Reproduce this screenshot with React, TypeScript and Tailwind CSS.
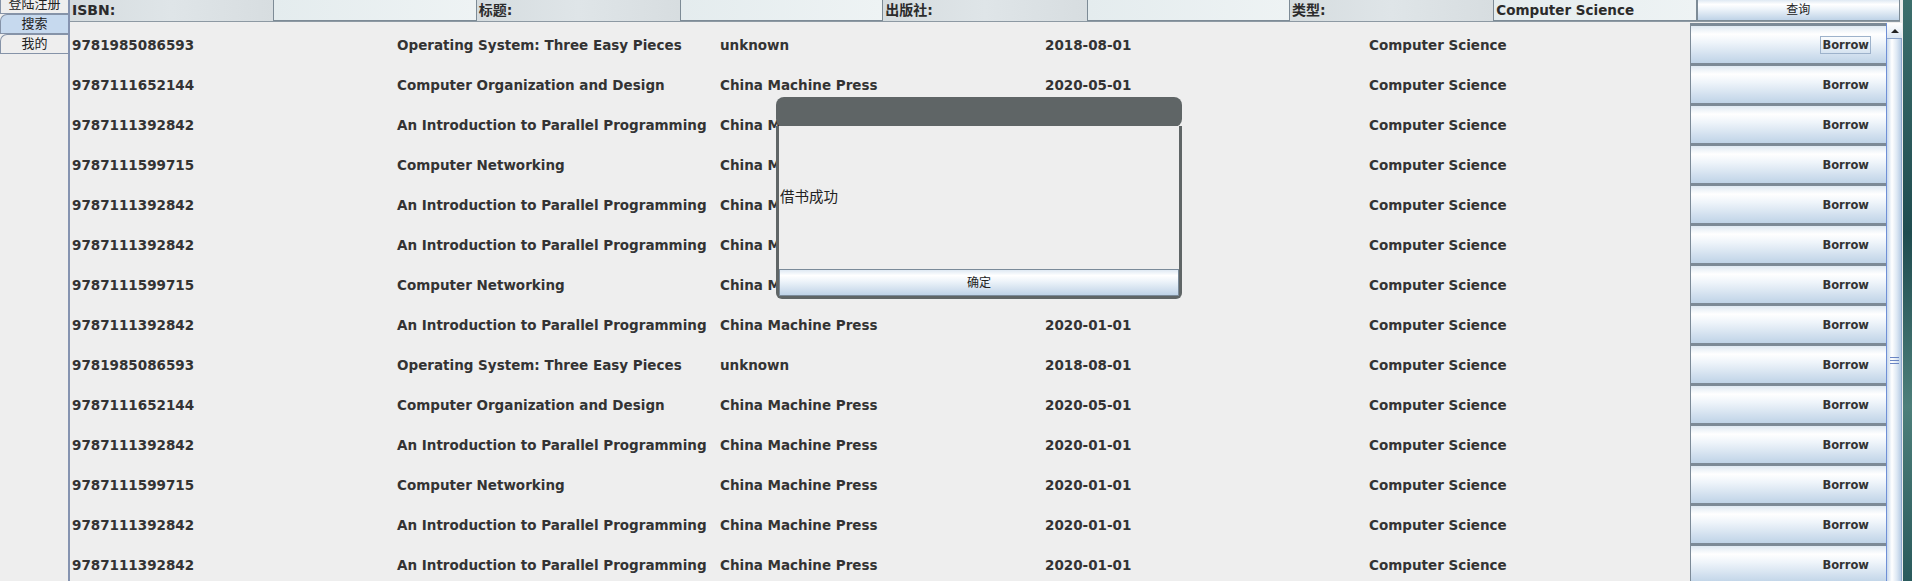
import React from 'react';

// rows of the book table
interface Book {
    isbn: string;
    title: string;
    publisher: string;
    date: string;
    category: string;
}

const OS: Book = { isbn: '9781985086593', title: 'Operating System: Three Easy Pieces', publisher: 'unknown', date: '2018-08-01', category: 'Computer Science' };
const COD: Book = { isbn: '9787111652144', title: 'Computer Organization and Design', publisher: 'China Machine Press', date: '2020-05-01', category: 'Computer Science' };
const PP: Book = { isbn: '9787111392842', title: 'An Introduction to Parallel Programming', publisher: 'China Machine Press', date: '2020-01-01', category: 'Computer Science' };
const NET: Book = { isbn: '9787111599715', title: 'Computer Networking', publisher: 'China Machine Press', date: '2020-01-01', category: 'Computer Science' };

const books: Book[] = [OS, COD, PP, NET, PP, PP, NET, PP, OS, COD, PP, NET, PP, PP];

const font = "font-['DejaVu_Sans','Noto_Sans_CJK_SC',sans-serif]";
const btnBg = 'bg-[linear-gradient(to_bottom,#dfe9f3,#ffffff_22%,#eef4fa_45%,#bfd3e7)]';

function Tab({ label, active }: { label: string; active?: boolean }) {
    return (
        <div
            className={`h-[20px] flex items-center justify-center text-[13px] text-[#222] border-t border-l border-b border-[#8593a8] rounded-tl-[7px] ${
                active ? 'bg-[#c6d9ee]' : 'bg-[#eeeeee]'
            }`}
        >
            {label}
        </div>
    );
}

function Label({ text }: { text: string }) {
    return (
        <div className="flex items-center pl-[2px] bg-[linear-gradient(to_right,#d5dcdf,#dfe5e8_50%,#d7dde0)] text-[14px] font-bold text-[#2b2b2b]">
            {text}
        </div>
    );
}

function Field({ value }: { value?: string }) {
    return (
        <div className="flex items-center pl-[2px] bg-[linear-gradient(to_right,#e4ecee,#eef3f4)] border-l border-b border-r border-[#7d8b96] text-[13.5px] font-bold text-[#2b2b2b]">
            {value}
        </div>
    );
}

export default function App() {
    return (
        <div className={`flex h-[581px] overflow-hidden ${font}`}>
            <div className="relative w-[1903px] shrink-0 flex bg-[#eeeeee]">
                {/* tabs on the left */}
                <div className="w-[70px] shrink-0 border-r-2 border-[#8593b0] -mt-[6px] flex flex-col">
                    <Tab label="登陆注册" />
                    <Tab label="搜索" active />
                    <Tab label="我的" />
                </div>

                <div className="flex-1 flex flex-col">
                    {/* search bar */}
                    <div className="h-[23px] grid grid-cols-9 w-[1830px] border-b border-[#8d99a3]">
                        <Label text="ISBN:" />
                        <Field />
                        <Label text="标题:" />
                        <Field />
                        <Label text="出版社:" />
                        <Field />
                        <Label text="类型:" />
                        <Field value="Computer Science" />
                        <div className={`flex items-center justify-center text-[12px] text-[#222] border-x border-b border-[#7d8b96] ${btnBg}`}>
                            查询
                        </div>
                    </div>

                    <div className="flex flex-1 mt-[1px]">
                        {/* table */}
                        <div className="flex flex-col w-[1816px]">
                            {books.map((b, i) => (
                                <div key={i} className="h-[40px] shrink-0 flex text-[13.5px] font-bold text-[#333]">
                                    <div className="w-[324px] pl-[2px] pt-[3px] flex items-center">{b.isbn}</div>
                                    <div className="w-[323px] pl-[3px] pt-[3px] flex items-center">{b.title}</div>
                                    <div className="w-[325px] pl-[3px] pt-[3px] flex items-center">{b.publisher}</div>
                                    <div className="w-[324px] pl-[3px] pt-[3px] flex items-center">{b.date}</div>
                                    <div className="w-[324px] pl-[3px] pt-[3px] flex items-center">{b.category}</div>
                                    <div
                                        className={`flex-1 flex items-center justify-end pr-[15px] border-t-[3px] border-l border-[#7c8a97] ${btnBg}`}
                                    >
                                        <span
                                            className={`px-[1px] leading-[16px] text-[11.5px] ${
                                                i === 0 ? 'border border-[#9db2cb]' : 'border border-transparent'
                                            }`}
                                        >
                                            Borrow
                                        </span>
                                    </div>
                                </div>
                            ))}
                        </div>

                        {/* scrollbar */}
                        <div className="w-[16px] flex flex-col border-l border-[#6f8fd6] bg-[#e9eff6]">
                            <div className="h-[16px] flex items-center justify-center bg-[linear-gradient(to_bottom,#ffffff,#dbe6f2)] border-b border-[#8aa3c9]">
                                <div className="w-0 h-0 border-x-[4px] border-x-transparent border-b-[4px] border-b-[#222]" />
                            </div>
                            <div className="flex-1 flex flex-col items-center bg-[linear-gradient(to_right,#c8d9ec,#ffffff_35%,#dde8f4_70%,#b7cce4)] border-r border-[#8ea6cc]">
                                <div className="flex flex-col gap-[2px] w-[9px] mt-[318px]">
                                    <div className="h-[1px] bg-[#6b86c4]" />
                                    <div className="h-[1px] bg-[#6b86c4]" />
                                    <div className="h-[1px] bg-[#6b86c4]" />
                                </div>
                            </div>
                        </div>
                    </div>
                </div>

                {/* message dialog */}
                <div className="absolute left-[776px] top-[97px] w-[406px] h-[202px] flex flex-col">
                    <div className="h-[30px] bg-[#5f6566] rounded-[8px] shrink-0" />
                    <div className="flex-1 flex flex-col bg-[#eeeeee] border-x-[3px] border-b-[3px] border-[#5f6566] rounded-b-[6px] -mt-[1px]">
                        <div className="flex-1 flex items-center pl-[1px] pt-[1px] text-[14.5px] text-[#222]">借书成功</div>
                        <div className={`h-[27px] flex items-center justify-center text-[12px] text-[#222] border border-[#7a8a99] ${btnBg}`}>
                            确定
                        </div>
                    </div>
                </div>
            </div>

            {/* desktop edge */}
            <div className="flex-1 bg-[linear-gradient(to_bottom,#3c6e6c,#1f4c50_40%,#4d7f7a_70%,#2a5a5c)]" />
        </div>
    );
}
